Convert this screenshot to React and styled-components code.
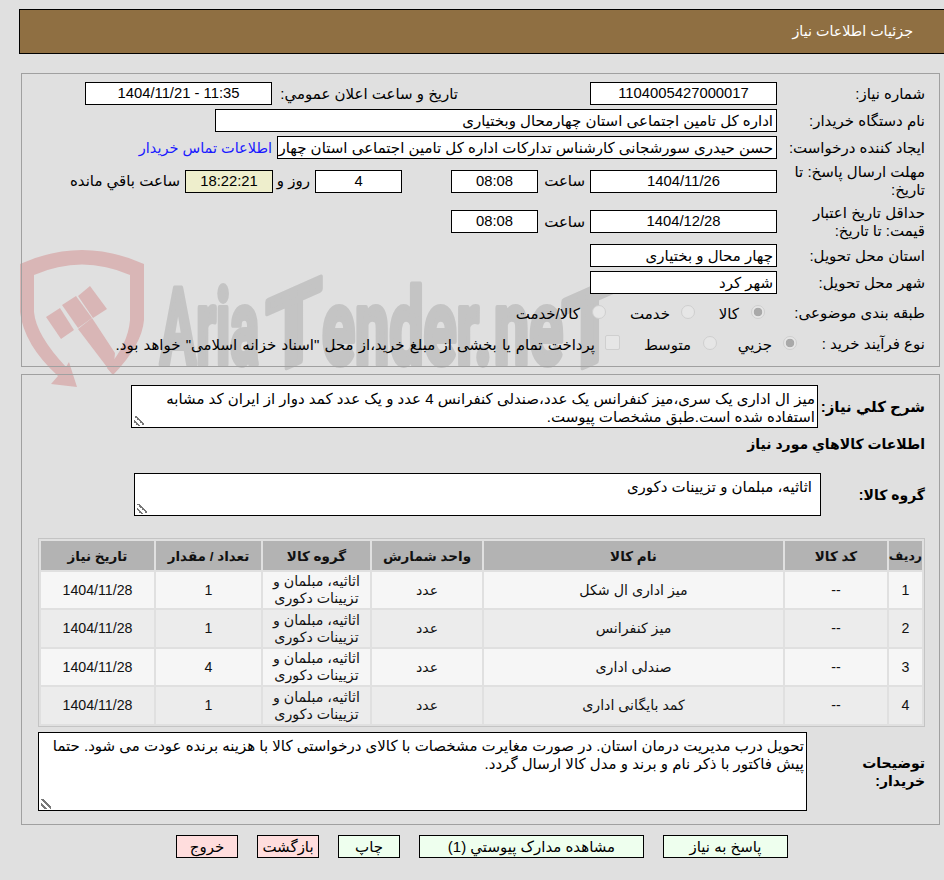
import React from "react";
import styled, { createGlobalStyle } from "styled-components";

const Global = createGlobalStyle`
  html, body { margin: 0; padding: 0; background: #e0e0e0; overflow: hidden; }
  body { font-family: "Liberation Sans", "DejaVu Sans", sans-serif; font-size: 15px; color: #000; }
`;

const Page = styled.div`
  position: relative;
  width: 944px;
  height: 880px;
  direction: rtl;
  overflow: hidden;
  padding-top: 9px;
  box-sizing: border-box;
`;
const Mark = styled.svg`
  position: absolute;
  left: 0;
  top: 0;
  pointer-events: none;
`;
const Header = styled.header`
  position: relative;
  height: 45px;
  margin: 0 0 19px 19px;
  box-sizing: border-box;
  background: #8f6f42;
  border: 1px solid #000;
  border-right: 0;
  display: flex;
  align-items: center;
  padding: 0 31px 2px 0;
  color: #fff;
  font-size: 14.3px;
`;
const Panel = styled.section`
  position: relative;
  margin: 0 4px 7px 21px;
  box-sizing: border-box;
  height: ${p => p.$h}px;
  border: 1px solid #a0a0a0;
  padding: ${p => p.$pt}px 14px 0 16px;
`;
const Row = styled.div`
  display: flex;
  align-items: center;
  height: ${p => p.$h || 27}px;
  margin-top: ${p => p.$mt || 0}px;
`;
const Label = styled.div`
  box-sizing: border-box;
  flex: none;
  width: ${p => p.$w || 148}px;
  padding-left: ${p => p.$pl ?? (p.$w ? 0 : 12)}px;
  line-height: 18px;
  font-weight: ${p => (p.$bold ? 700 : 400)};
  font-size: ${p => p.$bold || 15}px;
`;
const Text = styled.div`
  flex: none;
  margin-right: ${p => p.$ms || 0}px;
  padding-top: ${p => p.$dy || 0}px;
  width: ${p => (p.$w ? p.$w + "px" : "auto")};
  word-spacing: ${p => p.$ws || 0}px;
  white-space: nowrap;
`;
const Contact = styled.a`
  flex: none;
  margin-right: 5px;
  color: #1a1aff;
  font-size: 14.5px;
  white-space: nowrap;
  text-decoration: none;
`;
const Field = styled.div`
  flex: none;
  box-sizing: border-box;
  width: ${p => p.$w}px;
  height: ${p => p.$h || 23}px;
  margin-right: ${p => p.$ms || 0}px;
  padding: 0 3px;
  background: ${p => p.$bg || "#fff"};
  border: 1px solid #000;
  line-height: 21px;
  direction: ${p => (p.$num ? "ltr" : "rtl")};
  font-size: ${p => (p.$num ? 14.8 : 15)}px;
  text-align: ${p => (p.$num ? "center" : "right")};
  white-space: nowrap;
  overflow: hidden;
`;
const Radio = styled.input.attrs({ type: "radio", disabled: true })`
  appearance: none;
  flex: none;
  box-sizing: border-box;
  width: 14px;
  height: 14px;
  margin: 0 ${p => p.$ms || 0}px 0 0;
  border-radius: 50%;
  border: 1px solid #cfcfcf;
  background: #e6e6e6;
  position: relative;
  top: -1px;
  &:checked {
    background: radial-gradient(circle, #a9a9a9 0 4px, #e6e6e6 4.6px);
  }
`;
const Check = styled.input.attrs({ type: "checkbox", disabled: true })`
  appearance: none;
  flex: none;
  box-sizing: border-box;
  width: 15px;
  height: 15px;
  margin: 0;
  border-radius: 2px;
  border: 1px solid #cfcfcf;
  background: #e6e6e6;
  position: relative;
  top: -1px;
`;
const Note = styled.div`
  flex: none;
  box-sizing: border-box;
  width: ${p => p.$w}px;
  height: ${p => p.$h}px;
  padding: ${p => p.$pad || "4px 2px 0"};
  background: #fff;
  border: 1px solid #000;
  line-height: 18px;
  overflow: hidden;
  resize: both;
  &::-webkit-resizer {
    background: linear-gradient(45deg, transparent 20%, #777 20% 32%, transparent 32% 50%, #777 50% 62%, transparent 62%) left 2px bottom 1px / 10px 10px no-repeat;
  }
`;
const Heading = styled.div`
  font-weight: 700;
  font-size: 14px;
`;
const Grid = styled.table`
  width: 887px;
  margin: 22px 0 5px;
  box-sizing: border-box;
  table-layout: fixed;
  border-collapse: separate;
  border-spacing: 2px;
  border: 1px solid #c4c4c4;
  color: #111;
`;
const Th = styled.th`
  width: ${p => p.$w}px;
  height: 29px;
  padding: 0;
  background: #b3b3b3;
  font-size: ${p => p.$fs || 13.5}px;
  font-weight: 700;
  text-align: center;
`;
const Tr = styled.tr`
  height: 36px;
  background: #f6f6f6;
  &:nth-child(even) { height: 37px; background: #ececec; }
`;
const Td = styled.td`
  padding: 0 4px;
  text-align: center;
  line-height: 17px;
  font-size: 14.2px;
`;
const Actions = styled.nav`
  position: relative;
  display: flex;
  gap: 19px;
  margin-top: 10px;
  padding-right: 156px;
`;
const Button = styled.button`
  box-sizing: border-box;
  width: ${p => p.$w}px;
  height: 23px;
  padding: 0;
  border: 1px solid #000;
  background: ${p => (p.$danger ? "#ffdddd" : "#eeffee")};
  color: #000;
  font: inherit;
`;

const rows = [
  ["1", "میز اداری ال شکل", "1"],
  ["2", "میز کنفرانس", "1"],
  ["3", "صندلی اداری", "4"],
  ["4", "کمد بایگانی اداری", "1"],
];

const markFont = { fontFamily: "Roboto", fontWeight: 700, fontSize: 105, fill: "#c4c4c4", stroke: "#c4c4c4", strokeWidth: 6, strokeLinejoin: "round", direction: "ltr" };

export default function App() {
  return (
    <Page>
      <Global />
      <Mark width="944" height="880" viewBox="0 0 944 880">
        <g fill="#d9b6b6">
          <path d="M20 264Q82 236 144 264V320Q142 345 113 375L107 368Q128 345 130 320V275Q82 254 34 275V312Q36 335 66 367L69 362L77 387L51 384L58 376Q24 345 20 312Z" />
          <path d="M92 318L115 353L113 375L78 329Z" />
          <path d="M62 305L76 296L92 318L78 328Z" />
          <path d="M46 317L60 308L74 330L61 339Z" />
          <path d="M78 296L90 286L107 309L93 318Z" />
        </g>
        <text x="160" y="364" textLength="99" lengthAdjust="spacingAndGlyphs" style={markFont}>Aria</text>
        <text x="266" y="364" textLength="56" lengthAdjust="spacingAndGlyphs" transform="translate(294 0) skewY(-24) translate(-294 0)" style={markFont}>T</text>
        <text x="322" y="364" textLength="170" lengthAdjust="spacingAndGlyphs" style={markFont}>ender.</text>
        <text x="494" y="364" textLength="69" lengthAdjust="spacingAndGlyphs" style={markFont}>ne</text>
        <text x="562" y="364" textLength="56" lengthAdjust="spacingAndGlyphs" transform="translate(590 0) skewY(-24) translate(-590 0)" style={markFont}>T</text>
      </Mark>
      <Header>جزئیات اطلاعات نیاز</Header>
      <Panel $h={294} $pt={6}>
        <Row>
          <Label>شماره نیاز:</Label>
          <Field $w={187} $num>1104005427000017</Field>
          <Text $ms={132} $w={186}>تاریخ و ساعت اعلان عمومي:</Text>
          <Field $w={187} $num>1404/11/21 - 11:35</Field>
        </Row>
        <Row>
          <Label>نام دستگاه خریدار:</Label>
          <Field $w={562}>اداره کل تامین اجتماعی استان چهارمحال وبختیاری</Field>
        </Row>
        <Row>
          <Label $pl={0}>ایجاد کننده درخواست:</Label>
          <Field $w={500}>حسن حیدری سورشجانی کارشناس تدارکات اداره کل تامین اجتماعی استان چهارمحال وبختیاری</Field>
          <Contact href="#">اطلاعات تماس خریدار</Contact>
        </Row>
        <Row $h={40}>
          <Label>مهلت ارسال پاسخ: تا تاریخ:</Label>
          <Field $w={187} $num>1404/11/26</Field>
          <Text $ms={5} $w={47}>ساعت</Text>
          <Field $w={87} $num>08:08</Field>
          <Field $w={87} $ms={49} $num>4</Field>
          <Text $ms={5} $w={37}>روز و</Text>
          <Field $w={88} $num $bg="#eeeecc">18:22:21</Field>
          <Text $ms={5}>ساعت باقي مانده</Text>
        </Row>
        <Row $h={41}>
          <Label>حداقل تاریخ اعتبار قیمت: تا تاریخ:</Label>
          <Field $w={187} $num>1404/12/28</Field>
          <Text $ms={5} $w={47}>ساعت</Text>
          <Field $w={87} $num>08:08</Field>
        </Row>
        <Row>
          <Label>استان محل تحویل:</Label>
          <Field $w={187}>چهار محال و بختیاری</Field>
        </Row>
        <Row>
          <Label>شهر محل تحویل:</Label>
          <Field $w={187}>شهر کرد</Field>
        </Row>
        <Row $h={33}>
          <Label>طبقه بندی موضوعی:</Label>
          <Radio $ms={12} defaultChecked name="kind" />
          <Text $ms={12} $w={44} $dy={3}>کالا</Text>
          <Radio name="kind" />
          <Text $ms={11} $w={64} $dy={3}>خدمت</Text>
          <Radio name="kind" />
          <Text $ms={12} $dy={3}>کالا/خدمت</Text>
        </Row>
        <Row $h={29}>
          <Label $w={128}>نوع فرآیند خرید :</Label>
          <Radio defaultChecked name="proc" />
          <Text $ms={11} $w={55} $dy={3}>جزیي</Text>
          <Radio name="proc" />
          <Text $ms={12} $w={71} $dy={3}>متوسط</Text>
          <Check />
          <Text $ms={10} $ws={1} $dy={3}>پرداخت تمام یا بخشی از مبلغ خرید،از محل "اسناد خزانه اسلامی" خواهد بود.</Text>
        </Row>
      </Panel>
      <Panel $h={451} $pt={10}>
        <Row $h={43}>
          <Label $w={107} $bold={15}>شرح کلي نیاز:</Label>
          <Note $w={687} $h={43}>میز ال اداری یک سری،میز کنفرانس یک عدد،صندلی کنفرانس 4 عدد و یک عدد کمد دوار از ایران کد مشابه استفاده شده است.طبق مشخصات پیوست.</Note>
        </Row>
        <Row $h={24} $mt={4}>
          <Heading>اطلاعات کالاهاي مورد نیاز</Heading>
        </Row>
        <Row $h={43} $mt={17}>
          <Label $w={104} $bold={14}>گروه کالا:</Label>
          <Note $w={687} $h={43} $pad="4px 8px 0">اثاثیه، مبلمان و تزیینات دکوری</Note>
        </Row>
        <Grid>
          <thead>
            <tr>
              <Th $w={33} $fs={12.5}>ردیف</Th>
              <Th $w={102}>کد کالا</Th>
              <Th $w={299}>نام کالا</Th>
              <Th $w={110}>واحد شمارش</Th>
              <Th $w={107}>گروه کالا</Th>
              <Th $w={105}>تعداد / مقدار</Th>
              <Th $w={113}>تاریخ نیاز</Th>
            </tr>
          </thead>
          <tbody>
            {rows.map(r => (
              <Tr key={r[0]}>
                <Td>{r[0]}</Td>
                <Td>--</Td>
                <Td>{r[1]}</Td>
                <Td>عدد</Td>
                <Td>اثاثیه، مبلمان و تزیینات دکوری</Td>
                <Td>{r[2]}</Td>
                <Td>1404/11/28</Td>
              </Tr>
            ))}
          </tbody>
        </Grid>
        <Row $h={79}>
          <Label $w={118} $pl={50} $bold={14}>توضیحات خریدار:</Label>
          <Note $w={769} $h={79}>تحویل درب مدیریت درمان استان. در صورت مغایرت مشخصات  با کالای درخواستی کالا با هزینه برنده عودت می شود. حتما پیش فاکتور با ذکر نام و برند و مدل کالا ارسال گردد.</Note>
        </Row>
      </Panel>
      <Actions>
        <Button $w={125}>پاسخ به نیاز</Button>
        <Button $w={225}>مشاهده مدارک پیوستي (1)</Button>
        <Button $w={62}>چاپ</Button>
        <Button $w={62} $danger>بازگشت</Button>
        <Button $w={62} $danger>خروج</Button>
      </Actions>
    </Page>
  );
}
